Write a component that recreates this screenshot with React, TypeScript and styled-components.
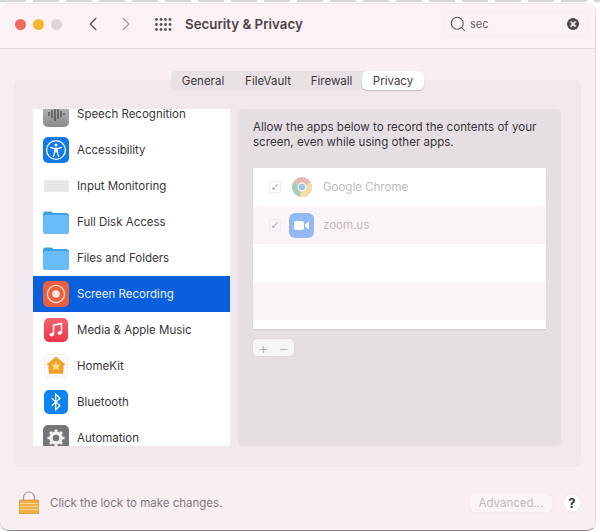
import React from 'react'
import styled, { createGlobalStyle } from 'styled-components'
import { ChevronLeft, ChevronRight, Search } from 'lucide-react'

const GlobalStyle = createGlobalStyle`
  html, body {
    margin: 0;
    padding: 0;
    background: #fff;
    font-family: Inter, 'Liberation Sans', sans-serif;
  }
`

const SpeechIcon = () => (
  <svg width="26" height="26" viewBox="0 0 26 26">
    <defs>
      <linearGradient id="sp" x1="0" y1="0" x2="0" y2="1">
        <stop offset="0" stopColor="#c4c0c2" />
        <stop offset="1" stopColor="#8b888a" />
      </linearGradient>
    </defs>
    <rect width="26" height="26" rx="5" fill="url(#sp)" />
    <path d="M6 11v4M9 9v8M12 6v14M15 8v10M18 10v6M21 12v2" stroke="#3c3a3c" strokeWidth="1.1" />
  </svg>
)

const AccessIcon = () => (
  <svg width="26" height="26" viewBox="0 0 26 26">
    <rect width="26" height="26" rx="5" fill="#1279e8" />
    <circle cx="13" cy="13" r="9.4" fill="none" stroke="#fff" strokeWidth="1.3" />
    <circle cx="13" cy="8" r="1.5" fill="#fff" />
    <path d="M7.5 10.5l3.5.8h4l3.5-.8M13 11.5v3.5M11.6 11.5v3.6l-1.2 4.5M14.4 11.5v3.6l1.2 4.5" stroke="#fff" strokeWidth="1.3" fill="none" strokeLinecap="round" />
  </svg>
)

const KeyboardIcon = () => (
  <svg width="25" height="12" viewBox="0 0 25 12">
    <rect width="25" height="12" rx="1" fill="#f0efef" />
    <path d="M0 2.5h25M0 5h25M0 7.5h25M0 10h25" stroke="#d9d7d8" strokeWidth="0.6" />
    <path d="M2 0v12M4 0v12M6 0v12M8 0v12M10 0v12M12 0v12M14 0v12M16 0v12M18 0v12M20 0v12M22 0v12" stroke="#dedcdd" strokeWidth="0.5" />
  </svg>
)

const FolderIcon = () => (
  <svg width="26" height="23" viewBox="0 0 26 23">
    <path d="M0 3.2C0 1.4 1 .4 2.6.4h5.2c1.3 0 1.8 1.6 3.2 1.6h12.2C25 2 26 3 26 4.6V7H0z" fill="#3f9fe6" />
    <rect y="4" width="26" height="19" rx="2.6" fill="#67bdf9" />
  </svg>
)

const RecordIcon = () => (
  <svg width="26" height="26" viewBox="0 0 26 26">
    <rect width="26" height="26" rx="5" fill="#e9603f" />
    <circle cx="13" cy="13" r="8.6" fill="none" stroke="#fbd8cc" strokeWidth="1.3" />
    <circle cx="13" cy="13" r="3.8" fill="#fbe6de" />
  </svg>
)

const MusicIcon = () => (
  <svg width="24" height="24" viewBox="0 0 24 24">
    <defs>
      <linearGradient id="mu" x1="0" y1="0" x2="0" y2="1">
        <stop offset="0" stopColor="#f9646f" />
        <stop offset="1" stopColor="#ec3348" />
      </linearGradient>
    </defs>
    <rect width="24" height="24" rx="5" fill="url(#mu)" />
    <path d="M9.5 16.5V7.2l8-1.7v9.3" fill="none" stroke="#fff" strokeWidth="1.5" />
    <ellipse cx="7.7" cy="16.8" rx="2.2" ry="1.8" fill="#fff" />
    <ellipse cx="15.7" cy="15.1" rx="2.2" ry="1.8" fill="#fff" />
  </svg>
)

const HomeIcon = () => (
  <svg width="24" height="24" viewBox="0 0 24 24">
    <rect x="0.5" y="0.5" width="23" height="23" rx="5" fill="#fdfbfa" stroke="#f1eeee" />
    <path d="M12 2.5l9.5 8-2 1.2v6.5c0 .9-.6 1.5-1.5 1.5H6c-.9 0-1.5-.6-1.5-1.5v-6.5l-2-1.2z" fill="#eea12c" />
    <path d="M12 7.5l1.4 2.9 3.2.4-2.3 2.1.6 3.1-2.9-1.5-2.9 1.5.6-3.1-2.3-2.1 3.2-.4z" fill="#fbdd84" />
  </svg>
)

const BluetoothIcon = () => (
  <svg width="24" height="24" viewBox="0 0 24 24">
    <rect width="24" height="24" rx="5" fill="#0d82f2" />
    <path d="M7.8 8.2l8.2 7.6-4.3 4V4.2l4.3 4-8.2 7.6" fill="none" stroke="#fff" strokeWidth="1.3" />
  </svg>
)

const GearIcon = () => (
  <svg width="26" height="26" viewBox="0 0 26 26">
    <rect width="26" height="26" rx="5" fill="#77757a" />
    <circle cx="13" cy="13" r="5" fill="none" stroke="#f1eff0" strokeWidth="3.4" />
    <path d="M13 4.5v3.4M13 18.1v3.4M4.5 13h3.4M18.1 13h3.4M7 7l2.4 2.4M16.6 16.6L19 19M19 7l-2.4 2.4M9.4 16.6L7 19" stroke="#f1eff0" strokeWidth="2.6" />
  </svg>
)

const ChromeIcon = () => (
  <svg width="20" height="20" viewBox="0 0 20 20">
    <circle cx="10" cy="10" r="10" fill="#e9b9b0" />
    <path d="M10 10L1.4 5A10 10 0 0 0 8 19.8z" fill="#a5cfae" />
    <path d="M10 10L8 19.8A10 10 0 0 0 18.8 5z" fill="#f3dea4" />
    <circle cx="10" cy="10" r="4.4" fill="#fff" />
    <circle cx="10" cy="10" r="3.3" fill="#a4c2f0" />
  </svg>
)

const ZoomIcon = () => (
  <svg width="25" height="25" viewBox="0 0 25 25">
    <rect width="25" height="25" rx="6" fill="#92b9f6" />
    <rect x="5" y="8" width="10" height="9" rx="2" fill="#fff" />
    <path d="M16 11.5l4-3v8l-4-3z" fill="#fff" />
  </svg>
)

const LockIcon = () => (
  <svg width="20" height="23" viewBox="0 0 20 23">
    <path d="M4.5 10V6.5a5.5 5.5 0 0 1 11 0V10" fill="none" stroke="#9d989a" strokeWidth="1.2" />
    <rect y="9" width="20" height="14" rx="1" fill="#efae46" stroke="#b98a3f" strokeWidth="0.6" />
    <path d="M1 12.5h18M1 15.5h18M1 18.5h18" stroke="#f8d58c" strokeWidth="1" />
  </svg>
)

const AppsGrid = () => (
  <svg width="17" height="13" viewBox="0 0 17 13" fill="#5c565a">
    {[1.5, 6.5, 11.5].map(y =>
      [1.5, 6, 10.5, 15].map(x => <circle key={`${x}-${y}`} cx={x} cy={y} r="1.4" />)
    )}
  </svg>
)

const categories = [
  { name: 'Speech Recognition', icon: <SpeechIcon /> },
  { name: 'Accessibility', icon: <AccessIcon /> },
  { name: 'Input Monitoring', icon: <KeyboardIcon /> },
  { name: 'Full Disk Access', icon: <FolderIcon /> },
  { name: 'Files and Folders', icon: <FolderIcon /> },
  { name: 'Screen Recording', icon: <RecordIcon />, active: true },
  { name: 'Media & Apple Music', icon: <MusicIcon /> },
  { name: 'HomeKit', icon: <HomeIcon /> },
  { name: 'Bluetooth', icon: <BluetoothIcon /> },
  { name: 'Automation', icon: <GearIcon /> },
]

const tabs = [
  { name: 'General', width: 64 },
  { name: 'FileVault', width: 66 },
  { name: 'Firewall', width: 61 },
  { name: 'Privacy', width: 62, active: true },
]

const apps = [
  { name: 'Google Chrome', icon: <ChromeIcon /> },
  { name: 'zoom.us', icon: <ZoomIcon /> },
]

const App = () => {
  return (
    <Page>
      <GlobalStyle />
      <Window>
        <TitleBar>
          <Lights>
            <Light color="#ee6a5f" />
            <Light color="#f5b731" />
            <Light color="#dcd6da" />
          </Lights>
          <NavButton>
            <ChevronLeft size={22} strokeWidth={1.6} color="#5a5458" />
          </NavButton>
          <NavButton>
            <ChevronRight size={22} strokeWidth={1.6} color="#aaa4a8" />
          </NavButton>
          <GridButton>
            <AppsGrid />
          </GridButton>
          <Title>Security &amp; Privacy</Title>
          <SearchBox>
            <Search size={18} strokeWidth={1.4} color="#5a5458" />
            <SearchText>sec</SearchText>
            <ClearButton>×</ClearButton>
          </SearchBox>
        </TitleBar>

        <Content>
          <Tabs>
            {tabs.map(t => (
              <Tab key={t.name} $active={t.active} $width={t.width}>
                {t.name}
              </Tab>
            ))}
          </Tabs>
          <Panel>
            <CategoryList>
              <ScrollArea>
                {categories.map(c => (
                  <CategoryRow key={c.name} $active={c.active}>
                    <IconSlot>{c.icon}</IconSlot>
                    <RowLabel>{c.name}</RowLabel>
                  </CategoryRow>
                ))}
              </ScrollArea>
            </CategoryList>
            <Detail>
              <Description>
                Allow the apps below to record the contents of your
                <br />
                screen, even while using other apps.
              </Description>
              <AppTable>
                {apps.map((a, i) => (
                  <AppRow key={a.name} $striped={i % 2 === 1}>
                    <CheckBox>✓</CheckBox>
                    <AppIcon>{a.icon}</AppIcon>
                    {a.name}
                  </AppRow>
                ))}
                <AppRow />
                <AppRow $striped />
              </AppTable>
              <PlusMinus>
                <PlusMinusButton>+</PlusMinusButton>
                <PlusMinusButton>−</PlusMinusButton>
              </PlusMinus>
            </Detail>
          </Panel>
        </Content>

        <Footer>
          <LockIcon />
          <LockText>Click the lock to make changes.</LockText>
          <AdvancedButton>Advanced...</AdvancedButton>
          <HelpButton>?</HelpButton>
        </Footer>
      </Window>
    </Page>
  )
}

const Page = styled.div`
  width: 600px;
  height: 532px;
  padding-top: 3px;
  box-sizing: border-box;
  overflow: hidden;
  background: repeating-linear-gradient(90deg, #d8d6d7 0 26px, #fff 26px 33px) 0 0 / 100% 2px no-repeat #fff;
`
const Window = styled.div`
  width: 596px;
  height: 528px;
  box-sizing: border-box;
  display: flex;
  flex-direction: column;
  background: #f9eff3;
  border-radius: 9px;
  border-right: 1px solid #e2dadd;
  border-bottom: 1px solid #8d8a8c;
  border-top: 1px solid #ece6e8;
  overflow: hidden;
`
const TitleBar = styled.div`
  height: 45px;
  box-sizing: border-box;
  flex-shrink: 0;
  display: flex;
  align-items: center;
  padding: 0 0 4px 15px;
  background: #fcf1f5;
  border-bottom: 1px solid #e5dbdf;
`
const Lights = styled.div`
  display: flex;
  gap: 7px;
  margin-right: 20px;
`
const Light = styled.span<{ color: string }>`
  width: 11px;
  height: 11px;
  border-radius: 50%;
  background: ${p => p.color};
`
const NavButton = styled.div`
  width: 22px;
  margin-right: 11px;
  display: flex;
  justify-content: center;
`
const GridButton = styled.div`
  display: flex;
  margin-left: 7px;
  margin-right: 13px;
`
const Title = styled.div`
  font-size: 13.3px;
  font-weight: 600;
  color: #4b4549;
  width: 258px;
  white-space: nowrap;
`
const SearchBox = styled.div`
  width: 145px;
  height: 24px;
  box-sizing: border-box;
  display: flex;
  align-items: center;
  padding: 0 8px 0 5px;
  border: 1px solid #f8edf1;
  border-radius: 5px;
`
const SearchText = styled.span`
  font-size: 11px;
  color: #6a6468;
  margin-left: 3px;
  flex: 1;
`
const ClearButton = styled.span`
  width: 12px;
  height: 12px;
  border-radius: 50%;
  background: #4e484c;
  color: #f5eef1;
  font-size: 12px;
  line-height: 12px;
  text-align: center;
  font-weight: 700;
`
const Content = styled.div`
  display: flex;
  flex-direction: column;
  align-items: center;
  padding: 22px 14px 0;
`
const Tabs = styled.div`
  display: flex;
  height: 19px;
  background: #e8e1e5;
  border-radius: 5px;
  margin-bottom: -10px;
  position: relative;
  z-index: 1;
`
const Tab = styled.div<{ $active?: boolean; $width: number }>`
  width: ${p => p.$width}px;
  display: flex;
  align-items: center;
  justify-content: center;
  font-size: 11.5px;
  color: #3f3a3e;
  border-radius: 5px;
  background: ${p => (p.$active ? '#ffffff' : 'transparent')};
  box-shadow: ${p => (p.$active ? '0 1px 1px rgba(90, 80, 85, 0.3)' : 'none')};
  & + & {
    border-left: ${p => (p.$active ? 'none' : '1px solid #f4edf0')};
  }
`
const Panel = styled.div`
  width: 567px;
  height: 387px;
  box-sizing: border-box;
  display: flex;
  gap: 8px;
  padding: 29px 20px 21px 19px;
  background: #f0e8ec;
  border-radius: 5px;
`
const CategoryList = styled.div`
  width: 197px;
  flex-shrink: 0;
  background: #fff;
  overflow: hidden;
`
const ScrollArea = styled.div`
  margin-top: -13px;
`
const CategoryRow = styled.div<{ $active?: boolean }>`
  height: 36px;
  display: flex;
  align-items: center;
  font-size: 11.5px;
  white-space: nowrap;
  color: ${p => (p.$active ? '#eaf2ff' : '#3a3539')};
  background: ${p => (p.$active ? '#0a5fdc' : 'transparent')};
`
const RowLabel = styled.span`
  padding-bottom: 1px;
`
const IconSlot = styled.div`
  width: 26px;
  margin-left: 10px;
  margin-right: 8px;
  display: flex;
  justify-content: center;
  align-items: center;
`
const Detail = styled.div`
  flex: 1;
  display: flex;
  flex-direction: column;
  background: #e5dfe4;
  border-radius: 5px;
  padding: 11px 15px 0;
`
const Description = styled.div`
  font-size: 11.6px;
  line-height: 15px;
  color: #3a3539;
  white-space: nowrap;
  margin-bottom: 18px;
`
const AppTable = styled.div`
  height: 161px;
  background: #fff;
  box-shadow: 0 1px 1px rgba(120, 110, 115, 0.15);
`
const AppRow = styled.div<{ $striped?: boolean }>`
  height: 38px;
  display: flex;
  align-items: center;
  font-size: 11.5px;
  color: #c0bbbf;
  background: ${p => (p.$striped ? '#faf3f7' : 'transparent')};
`
const CheckBox = styled.span`
  width: 12px;
  height: 12px;
  margin-left: 16px;
  margin-right: 8px;
  display: flex;
  align-items: center;
  justify-content: center;
  border: 1px solid #f0ecee;
  box-sizing: border-box;
  font-family: 'DejaVu Sans', sans-serif;
  font-size: 11px;
  color: #aaa5a9;
`
const AppIcon = styled.div`
  width: 25px;
  margin-right: 9px;
  display: flex;
  justify-content: center;
`
const PlusMinus = styled.div`
  width: 41px;
  height: 17px;
  margin-top: 10px;
  display: flex;
  background: #f8f5f7;
  border-radius: 4px;
  box-shadow: 0 0 1px rgba(120, 110, 115, 0.4);
`
const PlusMinusButton = styled.div`
  flex: 1;
  display: flex;
  align-items: center;
  justify-content: center;
  font-size: 16px;
  font-weight: 300;
  color: #b5b0b4;
`
const Footer = styled.div`
  flex: 1;
  display: flex;
  align-items: center;
  padding: 8px 14px 0 19px;
`
const LockText = styled.div`
  flex: 1;
  margin-left: 11px;
  font-size: 11.5px;
  color: #7f787d;
`
const AdvancedButton = styled.div`
  width: 82px;
  height: 18px;
  display: flex;
  align-items: center;
  justify-content: center;
  font-size: 11.5px;
  color: #bfb9bd;
  background: #fbf4f7;
  border-radius: 4px;
  box-shadow: 0 0 1px rgba(120, 110, 115, 0.3);
`
const HelpButton = styled.div`
  width: 18px;
  height: 18px;
  margin-left: 11px;
  border-radius: 50%;
  background: #fff;
  display: flex;
  align-items: center;
  justify-content: center;
  font-size: 13px;
  font-weight: 700;
  color: #3a3539;
  box-shadow: 0 0 1px rgba(120, 110, 115, 0.4);
`

export default App
